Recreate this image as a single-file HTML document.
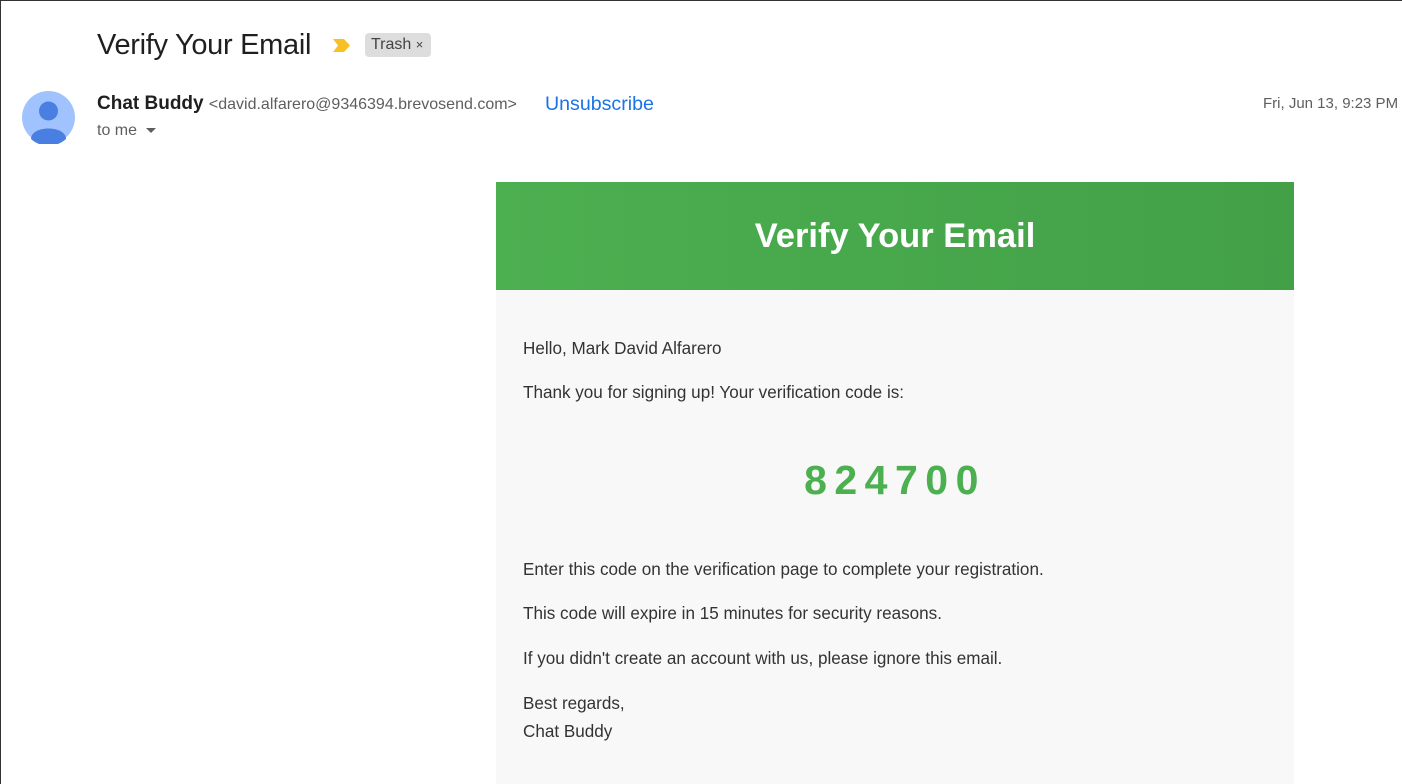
<!DOCTYPE html>
<html><head><style>
body{margin:0;width:1402px;height:784px;overflow:hidden;background:#fff;font-family:"Liberation Sans",Arial,sans-serif;position:relative}
.a{position:absolute;white-space:nowrap}
</style></head><body>
<div class="a" style="left:0;top:0;width:1px;height:784px;background:#333"></div>
<div class="a" style="left:0;top:0;width:1402px;height:1px;background:#333"></div>
<div class="a" style="left:97px;top:29px;font-size:29px;color:#1f1f1f;letter-spacing:-0.3px">Verify Your Email</div>
<svg class="a" style="left:333px;top:39px" width="18" height="13"><path d="M0 0H11L17 6.5 11 13H0L5 6.5Z" fill="#f6c026"/></svg>
<div class="a" style="left:365px;top:33px;height:24px;width:54px;padding:0 6px;background:#ddd;border-radius:4px;font-size:16px;line-height:24px;color:#444">Trash <span style="font-size:13px">×</span></div>
<svg class="a" style="left:22px;top:91px" width="53" height="53"><circle cx="26.5" cy="26.5" r="26.5" fill="#a0c3ff"/><circle cx="26.5" cy="20" r="9.5" fill="#4a7fe2"/><path d="M9 48 C9 34 44 34 44 48 A26 26 0 0 1 9 48Z" fill="#4a7fe2"/></svg>
<div class="a" style="left:97px;top:93px;font-size:19px;font-weight:bold;color:#1f1f1f">Chat Buddy <span style="font-weight:normal;font-size:16px;color:#5e5e5e">&lt;david.alfarero@9346394.brevosend.com&gt;</span></div>
<div class="a" style="left:545px;top:93px;font-size:19.6px;color:#1a73e8">Unsubscribe</div>
<div class="a" style="left:1263px;top:95px;font-size:15px;color:#5e5e5e">Fri, Jun 13, 9:23 PM</div>
<div class="a" style="left:97px;top:122px;font-size:16px;color:#5e5e5e">to me</div>
<svg class="a" style="left:146px;top:128px" width="10" height="6"><path d="M0 0H10L5 5Z" fill="#5e5e5e"/></svg>
<div class="a" style="left:496px;top:182px;width:798px;height:108px;background:linear-gradient(90deg,#4caf50,#43a047);color:#fff;font-size:34.5px;font-weight:bold;text-align:center;line-height:108px">Verify Your Email</div>
<div class="a" style="left:496px;top:290px;width:798px;height:494px;background:#f8f8f8;font-size:17.1px;color:#333">
<div class="a" style="left:27px;top:49px">Hello, Mark David Alfarero</div>
<div class="a" style="left:27px;top:93px">Thank you for signing up! Your verification code is:</div>
<div class="a" style="left:0;width:798px;text-align:center;top:167px;font-size:41px;font-weight:bold;color:#4caf50;letter-spacing:7.5px">824700</div>
<div class="a" style="left:27px;top:270px">Enter this code on the verification page to complete your registration.</div>
<div class="a" style="left:27px;top:314px">This code will expire in 15 minutes for security reasons.</div>
<div class="a" style="left:27px;top:359px">If you didn't create an account with us, please ignore this email.</div>
<div class="a" style="left:27px;top:404px">Best regards,</div>
<div class="a" style="left:27px;top:432px">Chat Buddy</div>
</div>
</body></html>
